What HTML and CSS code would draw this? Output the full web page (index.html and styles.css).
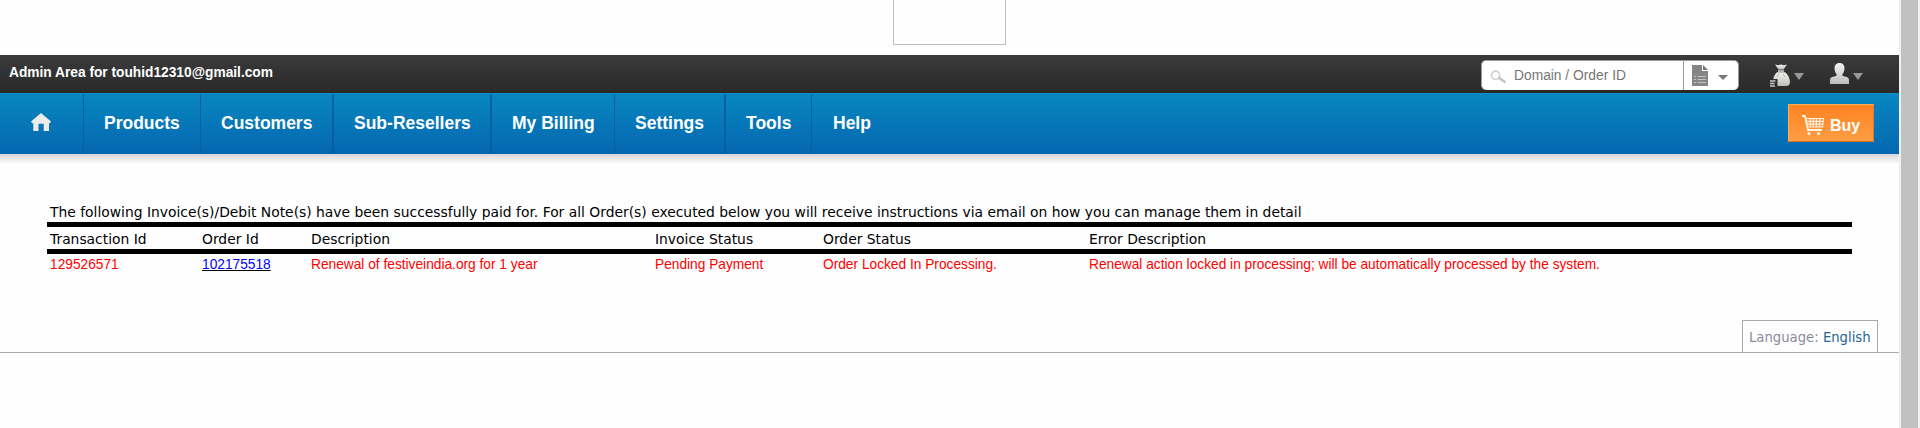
FILE: index.html
```html
<!DOCTYPE html>
<html lang="en">
<head>
<meta charset="utf-8">
<title>Admin Area</title>
<link rel="stylesheet" href="styles.css">
</head>
<body>
<div class="page">
  <div class="logo-slot"><div class="logo-box"></div></div>
  <header class="topbar">
    <span class="account">Admin Area for touhid12310@gmail.com</span>
    <div class="tools">
      <div class="search">
        <div class="search-field">
          <svg class="lens" width="17" height="15" viewBox="0 0 17 15"><circle cx="5.5" cy="5.2" r="4.1" fill="none" stroke="#d2d2d2" stroke-width="1.7"/><path d="M9.2 8L14.600 11.800" stroke="#c2c2c2" stroke-width="2.600" stroke-linecap="round"/></svg>
          <span class="placeholder">Domain / Order ID</span>
        </div>
        <div class="search-type">
          <svg width="16" height="21" viewBox="0 0 16 21"><path d="M0 0h10v6h6v15H0z" fill="#858585"/><path d="M11 0l5 5h-5z" fill="#777"/><path d="M2 11.500h2M5.500 11.500h8.500M2 14.500h2M5.500 14.500h8.500M2 17.500h2M5.500 17.500h8.500" stroke="#c4c4c4" stroke-width="1"/></svg>
          <svg class="type-caret" width="10" height="5" viewBox="0 0 10 5"><path d="M0 0h10L5 5z" fill="#777"/></svg>
        </div>
      </div>
      <div class="menu menu-money">
        <svg width="20" height="23" viewBox="0 0 20 23"><defs><linearGradient id="silver" x1="0" y1="0" x2="0" y2="1"><stop offset="0" stop-color="#f4f4f2"/><stop offset="1" stop-color="#bcbcb8"/></linearGradient></defs><path d="M5 0.500l3 .800 3-.800 3 .800 3-.800-3.500 5h-5z" fill="url(#silver)"/><path d="M8 7h6" stroke="#e6e6e6" stroke-width="1.400"/><path d="M7 8.200h8c3 2.500 5 6.500 5 9.800 0 3-2 4-4 4H7.500V15H3.300C3.800 12 5 10 7 8.200z" fill="url(#silver)"/><path d="M9 9.500l-2 3.500M13 9.500l2 3.500" stroke="#999" stroke-width=".7"/><path d="M0 17h5.500M0 19.500h4.500M0 22h5" stroke="#c9c9c6" stroke-width="1.400"/></svg>
        <svg class="caret" width="10" height="7" viewBox="0 0 10 7"><path d="M0 0h10L5 7z" fill="#999996"/></svg>
      </div>
      <div class="menu menu-user">
        <svg width="19" height="21" viewBox="0 0 19 21"><path d="M9.500 0c3.200 0 5 2 5 5.200 0 2.500-.800 4.500-2 5.800v1.200c0 .800.600 1 2.500 1.300 3 .500 4 1.600 4 3.800V21H0v-3.700c0-2.200 1-3.300 4-3.800 1.900-.300 2.500-.500 2.500-1.300V11c-1.200-1.300-2-3.300-2-5.800C4.500 2 6.300 0 9.500 0z" fill="url(#silver)"/></svg>
        <svg class="caret" width="10" height="7" viewBox="0 0 10 7"><path d="M0 0h10L5 7z" fill="#999996"/></svg>
      </div>
    </div>
  </header>
  <nav class="nav">
    <a class="item home"><svg width="20" height="18" viewBox="0 0 20 18"><path d="M10 0l10 8.500-1.200 1.800H18V18h-5.300v-7.300H7.500V18H2.300v-7.700H1.200L0 8.500z" fill="#ececec"/></svg></a>
    <a class="item products">Products</a>
    <a class="item customers wide-line">Customers</a>
    <a class="item resellers wide-line">Sub-Resellers</a>
    <a class="item billing">My Billing</a>
    <a class="item settings wide-line">Settings</a>
    <a class="item tool">Tools</a>
    <a class="item last">Help</a>
    <a class="buy"><svg width="22" height="20" viewBox="0 0 22 20"><path d="M0 1h3l3 14h14" fill="none" stroke="#fff4e8" stroke-width="1.800"/><path d="M4 3.500h17.500l-1 8.500H5.500M4.500 6.300h17M5 9.200h16M8 3.500l.500 8.500M11.200 3.500V12M14.400 3.500V12M17.800 3.500l-.300 8.500" fill="none" stroke="#fff0e0" stroke-width="1.200"/><circle cx="7" cy="18.500" r="1.500" fill="#fff4e8"/><circle cx="16.500" cy="18.500" r="1.500" fill="#fff4e8"/></svg><span>Buy</span></a>
  </nav>
  <div class="nav-shadow"></div>
  <main class="content">
    <p class="message">The following Invoice(s)/Debit Note(s) have been successfully paid for. For all Order(s) executed below you will receive instructions via email on how you can manage them in detail</p>
    <div class="row head">
      <span>Transaction Id</span><span>Order Id</span><span>Description</span><span>Invoice Status</span><span>Order Status</span><span>Error Description</span>
    </div>
    <div class="row data">
      <span>129526571</span><span><a class="order">102175518</a></span><span>Renewal of festiveindia.org for 1 year</span><span>Pending Payment</span><span>Order Locked In Processing.</span><span>Renewal action locked in processing; will be automatically processed by the system.</span>
    </div>
  </main>
  <div class="language-bar"><div class="language">Language: <a>English</a></div></div>
</div>
<div class="scrollbar"></div>
</body>
</html>
```
FILE: styles.css
```css
* { box-sizing: border-box; }
body { margin: 0; height: 428px; display: flex; overflow: hidden; background: #fefefe; font-family: "Liberation Sans", Arial, sans-serif; }
svg { display: block; flex: none; }
.page { width: 1899px; }
.scrollbar { width: 21px; background: #c1c1c1; border-left: 2px solid #f0f0f0; border-right: 2px solid #f0f0f0; }
.logo-slot { height: 55px; padding-left: 893px; }
.logo-box { width: 113px; height: 45px; border: 1px solid #bfbfbf; border-top: 0; }
.topbar { height: 38px; display: flex; justify-content: space-between; background: linear-gradient(#3b3b3b, #292929); }
.account { padding: 10px 0 0 9px; color: #fff; font-size: 13.74px; line-height: 16px; font-weight: bold; white-space: nowrap; }
.tools { display: flex; padding-right: 36px; }
.search { display: flex; width: 258px; height: 30px; margin-top: 5px; background: #fff; border: 1px solid #999; border-width: 1px 1px 0; border-radius: 5px; }
.search-field { display: flex; width: 202px; padding: 9px 0 0 8px; border-right: 1px solid #999; }
.placeholder { margin: -3px 0 0 7px; color: #757575; font-size: 13.8px; line-height: 18px; }
.search-type { display: flex; padding: 4px 0 0 8px; }
.type-caret { margin: 10px 0 0 10px; }
.menu { display: flex; }
.menu-money { padding-top: 9px; margin-left: 31px; }
.menu-user { padding-top: 8px; margin-left: 26px; }
.menu .caret { margin: 9px 0 0 4px; }
.menu-user .caret { margin-top: 10px; }
.nav { height: 61px; display: flex; background: linear-gradient(#0887c0, #0567b0); border-top: 1px solid #128fc0; color: #fff; font-size: 17.5px; font-weight: bold; line-height: 59px; }
.item { border-right: 1px solid #0560a0; padding-left: 20px; white-space: nowrap; }
.item.home { width: 84px; padding: 19px 0 0 31px; }
.item.wide-line { border-right-width: 2px; }
.products { width: 117px; }
.customers { width: 133px; }
.resellers { width: 158px; }
.billing { width: 123px; }
.settings { width: 111px; }
.tool { width: 86px; }
.item.last { border: 0; padding-left: 21px; }
.buy { display: flex; width: 86px; height: 38px; margin: 10px 25px 0 auto; padding: 10px 0 0 13px; border: 1px solid; border-color: #ffab62 #e07a25 #d87326 #ffab62; background: linear-gradient(#fd8222, #ff9d42); font-size: 16px; line-height: 22px; }
.buy span { margin-left: 6px; }
.nav-shadow { height: 10px; background: linear-gradient(#d6d6d6, #fefefe); }
.content { padding: 38px 0 0 47px; width: 1852px; }
.message { margin: 0; padding-left: 3px; height: 20px; font-family: Verdana, "DejaVu Sans", sans-serif; font-size: 13.87px; line-height: 20px; white-space: nowrap; }
.row { display: grid; grid-template-columns: 152px 109px 344px 168px 266px 1fr; padding-left: 3px; white-space: nowrap; }
.head { height: 32px; border-top: 5px solid #000; border-bottom: 5px solid #000; font-family: Verdana, "DejaVu Sans", sans-serif; font-size: 13.87px; line-height: 24px; }
.data { color: #f00; font-size: 13.72px; line-height: 21px; height: 66px; }
.order { color: #00f; text-decoration: underline #000; }
.language-bar { height: 33px; border-bottom: 1px solid #a9a9a9; display: flex; justify-content: flex-end; padding-right: 21px; }
.language { width: 136px; border: 1px solid #a9a9a9; border-bottom: 0; padding: 6px 0 0 6px; color: #8b8b9b; font-family: Tahoma, "DejaVu Sans Condensed", "DejaVu Sans", sans-serif; font-stretch: condensed; font-size: 14.7px; line-height: 20px; white-space: nowrap; }
.language a { color: #1f6795; }
```
